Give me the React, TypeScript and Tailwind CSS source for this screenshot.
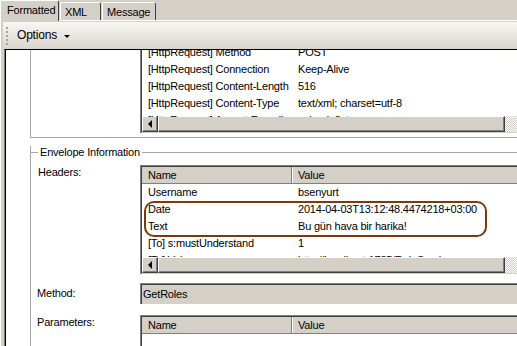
import React from "react";

const httpRows = [
  ["[HttpRequest] Method", "POST"],
  ["[HttpRequest] Connection", "Keep-Alive"],
  ["[HttpRequest] Content-Length", "516"],
  ["[HttpRequest] Content-Type", "text/xml; charset=utf-8"],
  ["[HttpRequest] Accept-Encoding", "gzip, deflate"],
];

const headerRows = [
  ["Username", "bsenyurt"],
  ["Date", "2014-04-03T13:12:48.4474218+03:00"],
  ["Text", "Bu gün hava bir harika!"],
  ["[To] s:mustUnderstand", "1"],
  ["[To] Value", "http://localhost:1735/RoleService.svc"],
];

function Raised({ className, children }: { className?: string; children?: React.ReactNode }) {
  return (
    <div
      className={`border border-t-white border-l-white border-r-[#404040] border-b-[#404040] bg-[#d4d0c8] ${className ?? ""}`}
    >
      <div className="h-full w-full border-r border-b border-[#808080] flex items-center justify-center">
        {children}
      </div>
    </div>
  );
}

function HScroll() {
  return (
    <div className="flex h-[16px] shrink-0">
      <Raised className="w-[16px] h-[16px] shrink-0">
        <div className="w-0 h-0 border-y-[4px] border-y-transparent border-r-[4px] border-r-black" />
      </Raised>
      <Raised className="w-[347px] h-[16px] shrink-0" />
      <div className="flex-1 bg-[repeating-conic-gradient(#d4d0c8_0_25%,#ffffff_0_50%)] bg-[length:2px_2px]" />
    </div>
  );
}

function ColumnHeader() {
  return (
    <div className="flex h-[17px] shrink-0 bg-[#d4d0c8] border-b border-[#808080]">
      <div className="w-[150px] shrink-0 pl-[6px] border-r border-[#808080] flex items-center">Name</div>
      <div className="flex-1 pl-[5px] border-l border-white flex items-center">Value</div>
    </div>
  );
}

function Rows({ rows, highlight }: { rows: string[][]; highlight?: boolean }) {
  return (
    <div className="relative h-[73px] overflow-hidden">
      {rows.map(([name, value]) => (
        <div key={name} className="flex h-[17px] items-center whitespace-nowrap">
          <div className="w-[150px] shrink-0 pl-[6px]">{name}</div>
          <div className="pl-[6px]">{value}</div>
        </div>
      ))}
      {highlight && (
        <div className="absolute left-[2px] top-[17px] w-[343px] h-[36px] border-2 border-[#7a3a10] rounded-[10px]" />
      )}
    </div>
  );
}

function Sunken({ className, children }: { className?: string; children?: React.ReactNode }) {
  return (
    <div className={`border-t border-l border-[#808080] ${className ?? ""}`}>
      <div className="h-full border-t border-l border-b border-t-[#404040] border-l-[#404040] border-b-[#d4d0c8] bg-white flex flex-col">
        {children}
      </div>
    </div>
  );
}

export default function App() {
  return (
    <div className="w-[517px] h-[346px] overflow-hidden bg-[#d4d0c8] flex flex-col font-['Liberation_Sans',Arial,sans-serif] text-[11px] leading-[13px] tracking-[-0.2px] text-black">
      {/* Tabs */}
      <div className="h-[20px] flex items-end shrink-0">
        <div className="relative z-10 h-[21px] -mb-px w-[59px] pl-[6px] pt-[3px] bg-[#d4d0c8] border-t border-l border-white border-r border-r-[#404040] rounded-tl-[2px] rounded-tr-[3px]">
          Formatted
        </div>
        <div className="h-[18px] w-[41px] ml-px pl-[4px] pt-[3px] border-t border-l border-white border-r border-r-[#404040] rounded-tl-[2px] rounded-tr-[3px]">
          XML
        </div>
        <div className="h-[18px] w-[54px] ml-px pl-[4px] pt-[3px] border-t border-l border-white border-r border-r-[#404040] rounded-tl-[2px] rounded-tr-[3px]">
          Message
        </div>
      </div>

      {/* Tab page */}
      <div className="flex-1 min-h-0 flex flex-col border-t border-l border-white pt-px pl-[2px]">
        {/* Toolbar */}
        <div className="h-[27px] shrink-0 flex items-center pl-[3px] bg-linear-to-b from-[#f8f7f4] to-[#d9d5cc]">
          <div className="w-[2px] h-[18px] bg-[repeating-linear-gradient(to_bottom,#a8a49c_0_2px,transparent_2px_4px)]" />
          <span className="ml-[9px] text-[12px]">Options</span>
          <div className="ml-[7px] mt-px w-0 h-0 border-x-[3px] border-x-transparent border-t-[3px] border-t-black" />
        </div>

        {/* Scrolled panel */}
        <div className="flex-1 min-h-0 ml-px overflow-hidden bg-white border-t border-l border-t-black border-l-[#808080] shadow-[inset_1px_0_0_#000]">
          {/* Upper group (scrolled out) */}
          <div className="ml-[25px] border-l border-b border-[#a6a6a6] pb-[4px]">
            <Sunken className="ml-[109px] -mt-[8px]">
              <Rows rows={httpRows} />
              <div className="-mt-px">
                <HScroll />
              </div>
            </Sunken>
          </div>

          {/* Envelope Information */}
          <div className="ml-[25px] mt-[14px] border-l border-[#a6a6a6] pb-[20px]">
            <div className="flex items-center h-[13px] -mt-[6px]">
              <div className="w-[7px] h-px bg-[#a6a6a6]" />
              <span className="px-[2px]">Envelope Information</span>
              <div className="flex-1 h-px bg-[#a6a6a6]" />
            </div>

            <div className="flex mt-[6px]">
              <div className="w-[109px] shrink-0 pl-[7px] pt-px">Headers:</div>
              <Sunken className="flex-1">
                <ColumnHeader />
                <Rows rows={headerRows} highlight />
                <HScroll />
              </Sunken>
            </div>

            <div className="flex items-center mt-[9px]">
              <div className="w-[109px] shrink-0 pl-[6px]">Method:</div>
              <div className="flex-1 h-[21px] border-t border-l border-[#808080] bg-[#d4d0c8]">
                <div className="h-full border-t border-l border-[#404040] flex items-center pl-px">GetRoles</div>
              </div>
            </div>

            <div className="flex mt-[11px]">
              <div className="w-[109px] shrink-0 pl-[6px] pt-px">Parameters:</div>
              <Sunken className="flex-1 h-[60px]">
                <ColumnHeader />
              </Sunken>
            </div>
          </div>
        </div>
      </div>
    </div>
  );
}
